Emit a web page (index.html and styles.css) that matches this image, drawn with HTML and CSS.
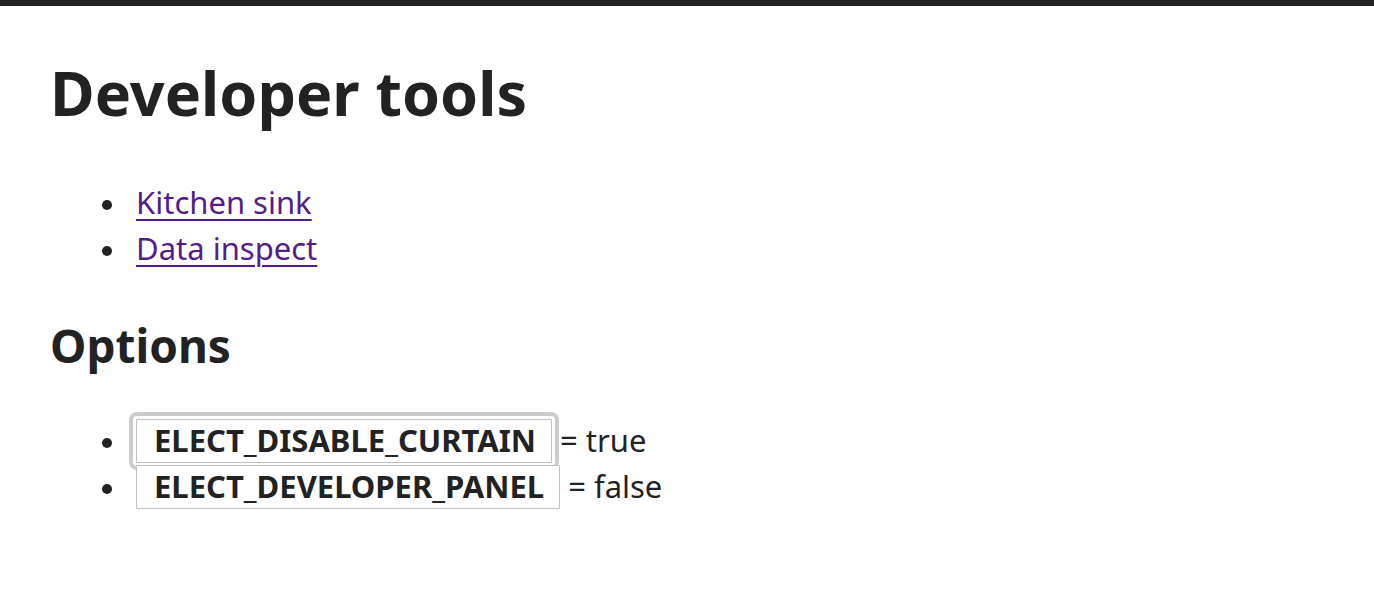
FILE: index.html
```html
<!DOCTYPE html>
<html lang="en">
<head>
<meta charset="utf-8">
<title>Developer tools</title>
<link rel="stylesheet" href="styles.css">
</head>
<body>
<div class="topbar"></div>
<main class="page">
  <h1 class="title">Developer tools</h1>
  <ul class="list links">
    <li class="item"><a class="link" href="#kitchen-sink">Kitchen sink</a></li>
    <li class="item"><a class="link" href="#data-inspect">Data inspect</a></li>
  </ul>
  <h2 class="subtitle">Options</h2>
  <ul class="list options">
    <li class="item"><button class="opt opt-focus" type="button">ELECT_DISABLE_CURTAIN</button> = true</li>
    <li class="item"><button class="opt" type="button">ELECT_DEVELOPER_PANEL</button> = false</li>
  </ul>
</main>
</body>
</html>
```
FILE: styles.css
```css
html, body {
  margin: 0;
  padding: 0;
  background: #ffffff;
}

body {
  font-family: "Noto Sans", "Open Sans", sans-serif;
  color: #222222;
}

.topbar {
  height: 6px;
  background: #222222;
}

.page {
  padding: 45px 50px 0 50px;
}

.title {
  margin: 0;
  font-size: 61px;
  line-height: 84px;
  font-weight: 700;
  color: #222222;
}

.list {
  margin: 44px 0 0 0;
  padding-left: 86px;
  font-size: 31px;
  line-height: 46px;
  list-style: none;
}

.item {
  color: #222222;
}

.item::before {
  content: "";
  display: inline-block;
  width: 10px;
  height: 10px;
  border-radius: 50%;
  background: #222222;
  margin-left: -34px;
  margin-right: 24px;
  vertical-align: 4px;
}

.link {
  color: #551a8b;
  text-decoration: underline;
  text-decoration-thickness: 2px;
  text-underline-offset: 5px;
}

.subtitle {
  margin: 43px 0 0 0;
  font-size: 46px;
  line-height: 62px;
  font-weight: 700;
  color: #222222;
}

.options {
  margin-top: 41px;
}

.opt {
  font-family: "Noto Sans", "Open Sans", sans-serif;
  font-size: 31px;
  font-weight: 700;
  line-height: 40px;
  height: 44px;
  padding: 0 15px 2px 17px;
  margin: 0;
  color: #222222;
  background: #ffffff;
  border: 1px solid #c2c2c2;
  border-radius: 1px;
  vertical-align: baseline;
}

.opt-focus {
  outline: 4px solid #cbcbcb;
  outline-offset: 3px;
}
```
